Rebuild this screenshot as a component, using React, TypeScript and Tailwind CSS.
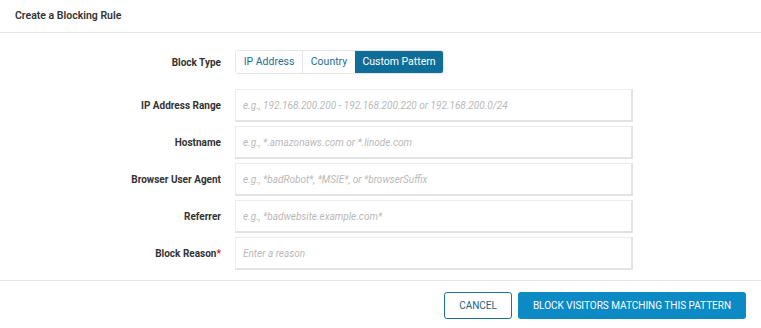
import React, { useState } from 'react';

type BlockType = 'ip' | 'country' | 'pattern';

const fields = [
  { label: 'IP Address Range', placeholder: 'e.g., 192.168.200.200 - 192.168.200.220 or 192.168.200.0/24' },
  { label: 'Hostname', placeholder: 'e.g., *.amazonaws.com or *.linode.com' },
  { label: 'Browser User Agent', placeholder: 'e.g., *badRobot*, *MSIE*, or *browserSuffix' },
  { label: 'Referrer', placeholder: 'e.g., *badwebsite.example.com*' },
  { label: 'Block Reason', placeholder: 'Enter a reason', required: true },
];

function App() {
  const [blockType, setBlockType] = useState<BlockType>('pattern');

  const segments: { id: BlockType; label: string; w: string }[] = [
    { id: 'ip', label: 'IP Address', w: 'w-[66px]' },
    { id: 'country', label: 'Country', w: 'w-[53px]' },
    { id: 'pattern', label: 'Custom Pattern', w: 'w-[88px]' },
  ];

  return (
    <div className="min-h-screen bg-white font-['Roboto',sans-serif] text-[#333]">
      {/* header */}
      <div className="h-[33px] px-[15px] flex items-center border-b border-[#e7e7e7]">
        <h2 className="text-[10.5px] font-semibold text-[#333]">Create a Blocking Rule</h2>
      </div>

      {/* body */}
      <div className="pt-[17px] pb-[10px]">
        <div className="flex items-center h-[24px]">
          <div className="w-[221px] text-right text-[10px] font-bold text-[#333]">Block Type</div>
          <div className="ml-[14px] flex rounded-[3px] border border-[#e6e6e6] h-[24px] overflow-hidden">
            {segments.map((s, i) => (
              <button
                key={s.id}
                onClick={() => setBlockType(s.id)}
                className={
                  blockType === s.id
                    ? s.w + ' text-[10.5px] bg-[#0f6e98] text-white'
                    : s.w + ' text-[10.5px] text-[#1c6e96] bg-white ' + (i > 0 ? 'border-l border-[#e6e6e6]' : '')
                }
              >
                {s.label}
              </button>
            ))}
          </div>
        </div>

        <div className="mt-[15px] flex flex-col gap-[4px]">
          {fields.map(f => (
            <div key={f.label} className="flex items-center">
              <label className="w-[221px] text-right text-[10px] font-bold text-[#333]">
                {f.label}
                {f.required && <span className="text-[#b62a2a]">*</span>}
              </label>
              <input
                placeholder={f.placeholder}
                className="ml-[14px] w-[398px] h-[33px] px-[7px] text-[10px] border border-[#ececec] border-r-2 border-b-2 border-r-[#e3e3e3] border-b-[#e3e3e3] outline-none placeholder:italic placeholder:text-[#b9b9b9]"
              />
            </div>
          ))}
        </div>
      </div>

      {/* footer */}
      <div className="border-t border-[#e7e7e7] pt-[11px] px-[15px] flex justify-end gap-[6px]">
        <button className="h-[27px] w-[68px] rounded-[3px] border border-[#1f6f95] text-[10px] text-[#1f5f80] bg-white">
          CANCEL
        </button>
        <button className="h-[27px] w-[228px] rounded-[3px] bg-[#0b8ac4] text-[10px] text-white">
          BLOCK VISITORS MATCHING THIS PATTERN
        </button>
      </div>
    </div>
  );
}

export default App;
